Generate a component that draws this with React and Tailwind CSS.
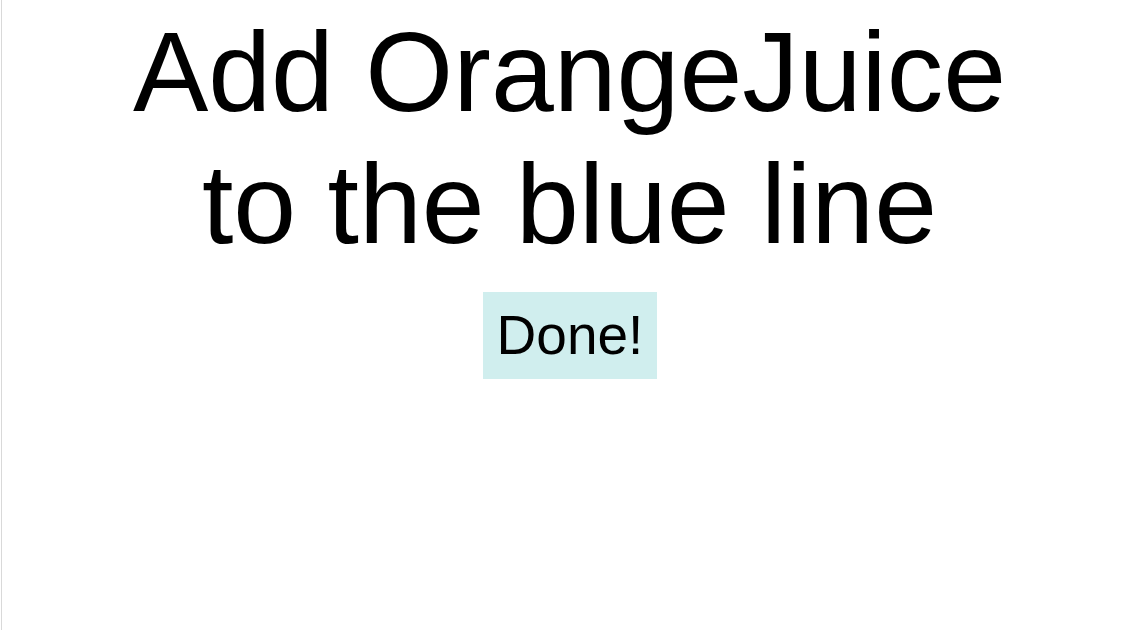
export default function App() {
  return (
    <div className="h-[630px] w-full bg-white overflow-hidden">
      <div className="ml-px h-full border-l border-[#d9d9d9] flex flex-col items-center pt-[6px] pl-[5px] font-['Liberation_Sans',Arial,sans-serif] text-black">
        <h1 className="text-[113px] leading-[132px] font-normal text-center">
          Add OrangeJuice
          <br />
          to the blue line
        </h1>
        <button className="mt-[22px] ml-px bg-[#d0eeee] px-[14px] py-[10px] text-[55px] leading-[67px]">
          Done!
        </button>
      </div>
    </div>
  )
}
